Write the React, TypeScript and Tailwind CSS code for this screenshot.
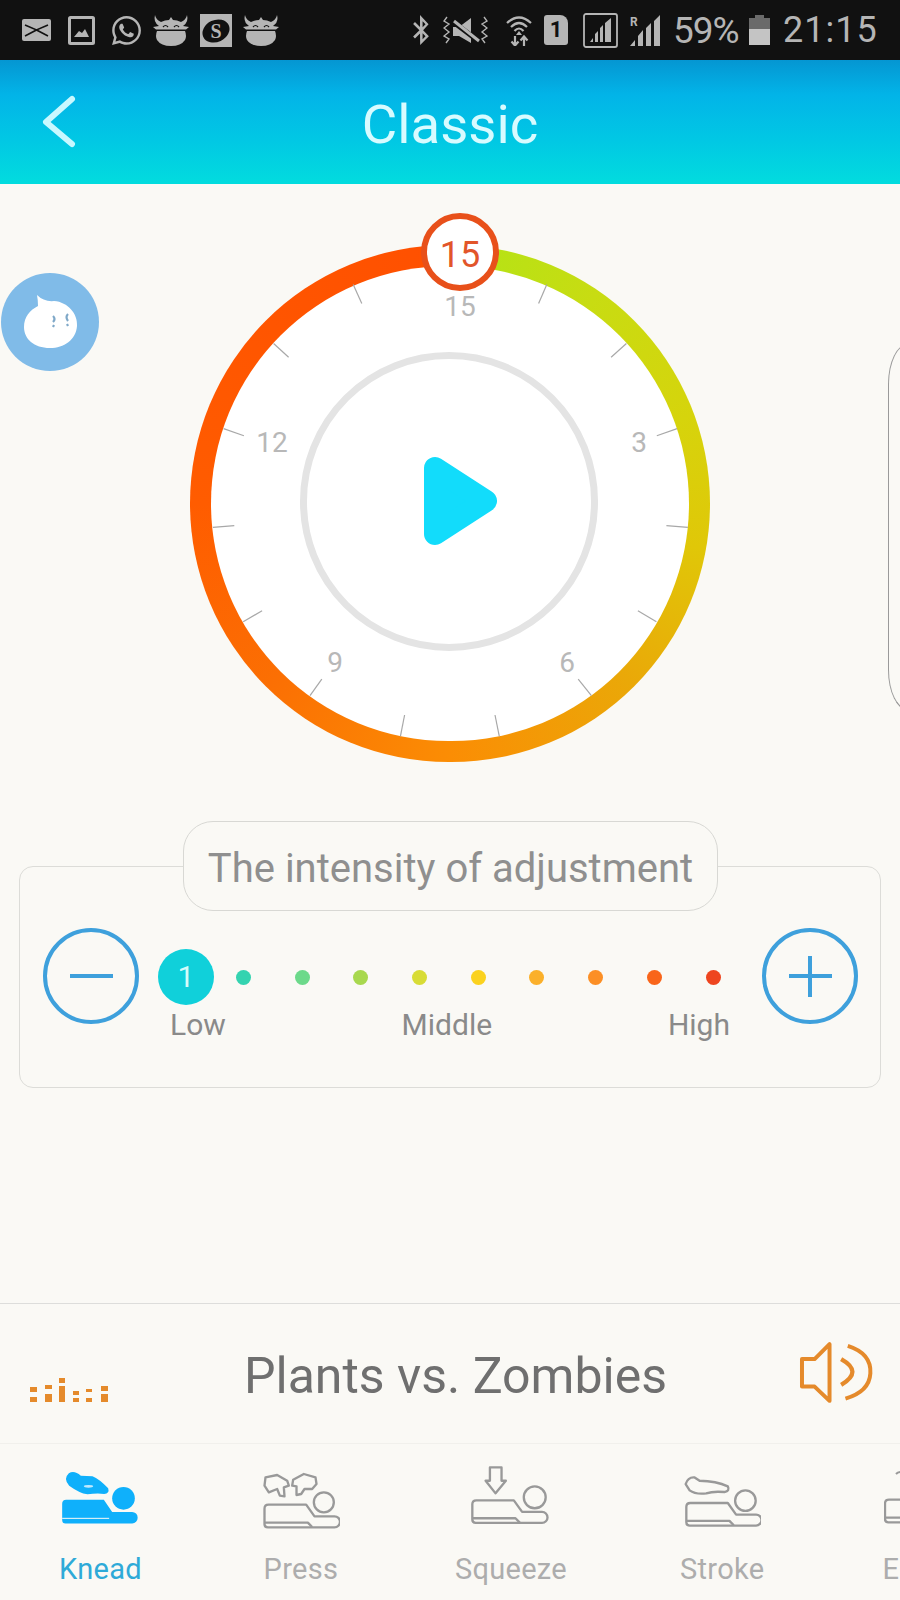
import { FaWhatsapp, FaBluetoothB } from "react-icons/fa";

const dots = ["#34d3b0", "#6cd98a", "#a8d84e", "#d8dc35", "#fbd21e", "#fbb02a", "#fc8f25", "#f9651a", "#ee451f"];

const ticks = [
  [353.2, 284.4, 361.8, 303.6],
  [546.8, 284.4, 538.6, 303.6],
  [273.6, 343.5, 288.6, 357.2],
  [626.4, 343.5, 611.1, 357.2],
  [223.6, 428.6, 243.9, 435.7],
  [677.1, 428.6, 656.8, 435.7],
  [212.9, 527.4, 234.3, 525.6],
  [687.9, 527.4, 666.4, 525.6],
  [243.2, 621.8, 262.1, 610.7],
  [656.4, 621.8, 637.9, 610.7],
  [310, 695.7, 321.8, 679.1],
  [591.4, 695.7, 578.2, 679.1],
  [400.4, 736.4, 404.6, 715],
  [499.3, 736.4, 495, 715],
];

// segments of the little equalizer, [x, y, w, h]
const eqBars = [
  [31, 95, 7, 5], [31, 105, 7, 5],
  [46, 93, 7, 4], [46, 102, 7, 8],
  [60, 86, 6, 5], [60, 94, 6, 16],
  [74, 99, 6, 4], [74, 106, 6, 4],
  [87, 97, 6, 3], [87, 106, 6, 4],
  [102, 94, 7, 5], [102, 102, 7, 8],
];

function Cow() {
  return (
    <svg viewBox="0 0 36 32" className="w-[36px] h-[32px]">
      <path d="M2 1 Q3 6 8 8 Q12 6 16 6 L18 3 L20 6 Q24 6 28 8 Q33 6 34 1 Q36 8 30 12 L36 13 L33 15.5 H3 L0 13 L6 12 Q0 8 2 1 Z" fill="#b5b5b5" />
      <path d="M10 13 q2.500 -3 5 0 M21 13 q2.500 -3 5 0" fill="none" stroke="#111" strokeWidth="1.2" />
      <path d="M4 17 H32 Q34 22 32 26 Q28 32 18 32 Q8 32 4 26 Q2 22 4 17 Z" fill="#b5b5b5" />
    </svg>
  );
}

function StatusBar() {
  return (
    <div className="h-[60px] shrink-0 bg-[#111111] flex items-center justify-between pl-[22px] pr-[25px] text-[#b5b5b5]">
      <div className="flex items-center">
        <svg viewBox="0 0 29 22" className="w-[29px] h-[22px]">
          <rect width="29" height="22" rx="2" fill="#b5b5b5" />
          <path d="M3 6 L14.500 11 L26 6 M3 17 L14.500 11 L26 17" fill="none" stroke="#111" strokeWidth="1.6" />
        </svg>
        <svg viewBox="0 0 27 29" className="w-[27px] h-[29px] ml-[17px]">
          <rect x="1.500" y="1.500" width="24" height="26" rx="1" fill="#111" stroke="#b5b5b5" strokeWidth="3" />
          <path d="M6 21 L11 15 L14 17 L17 13 L21 21 Z" fill="#b5b5b5" />
        </svg>
        <FaWhatsapp className="w-[33px] h-[33px] ml-[15px]" />
        <div className="ml-[10px]"><Cow /></div>
        <svg viewBox="0 0 32 33" className="w-[32px] h-[33px] ml-[11px]">
          <rect width="32" height="33" fill="#b5b5b5" />
          <ellipse cx="16" cy="17" rx="14" ry="11" fill="#111" transform="rotate(-25 16 17)" />
          <text x="16" y="24" textAnchor="middle" fontSize="20" fontWeight="700" fontFamily="'Liberation Serif', serif" fill="#b5b5b5">S</text>
        </svg>
        <div className="ml-[11px]"><Cow /></div>
      </div>
      <div className="flex items-center">
        <FaBluetoothB className="w-[24px] h-[30px]" />
        <svg viewBox="0 0 45 30" className="w-[45px] h-[30px] ml-[10px]">
          <path d="M4 2 L1 6 L6 9 L1 13 L6 17 L1 21 L6 24 L3 28 M41 2 L44 6 L39 9 L44 13 L39 17 L44 21 L39 24 L42 28" fill="none" stroke="#b5b5b5" strokeWidth="1.4" />
          <path d="M10 12 H16 L28 3 V28 L16 21 H10 Z" fill="#b5b5b5" />
          <path d="M9 6 L38 28" stroke="#111" strokeWidth="5" />
          <path d="M11 6 L36 26" stroke="#b5b5b5" strokeWidth="3" />
        </svg>
        <svg viewBox="0 0 26 31" className="w-[26px] h-[31px] ml-[18px]">
          <path d="M1 8 Q13 -3 25 8 M5 12 Q13 4 21 12 M8.500 16 Q13 11 17.500 16" fill="none" stroke="#b5b5b5" strokeWidth="2.2" />
          <path d="M13 16 L10 20 H16 Z" fill="#b5b5b5" />
          <path d="M9 21 V30 M5.500 26.500 L9 30.500 L12.500 26.500 M18 31 V22 M14.500 25.500 L18 21.500 L21.500 25.500" fill="none" stroke="#b5b5b5" strokeWidth="2.2" />
        </svg>
        <div className="ml-[12px] w-[24px] h-[30px] bg-[#b5b5b5] rounded-[3px] rounded-tr-[8px] flex items-center justify-center text-[#111111] text-[22px] leading-none font-bold">
          1
        </div>
        <svg viewBox="0 0 35 35" className="w-[35px] h-[35px] ml-[15px]">
          <rect x="1" y="1" width="33" height="33" rx="2" fill="none" stroke="#b5b5b5" strokeWidth="1.8" />
          <path d="M7 29 L10 25 V29 Z M12 29 V21 L15 18 V29 Z M17 29 V15 L20 12 V29 Z M22 29 V10 L28 5 V29 Z" fill="#b5b5b5" />
        </svg>
        <svg viewBox="0 0 30 31" className="w-[30px] h-[31px] ml-[12px]">
          <text x="0" y="11" fontSize="12" fontWeight="700" fontFamily="Roboto, sans-serif" fill="#b5b5b5">R</text>
          <path d="M0 31 L5 25 V31 Z M8 31 V21 L13 15 V31 Z M16 31 V13 L21 8 V31 Z M24 31 V6 L30 0 V31 Z" fill="#b5b5b5" />
        </svg>
        <span className="ml-[13px] text-[37px] leading-none font-['Roboto',sans-serif] w-[68px] whitespace-nowrap tracking-[-1px]">59%</span>
        <div className="ml-[8px] w-[21px] h-[30px] flex flex-col items-center">
          <div className="w-[9px] h-[3px] bg-[#6a6a6a]" />
          <div className="w-full h-[11px] bg-[#6a6a6a]" />
          <div className="w-full h-[16px] bg-[#c4c4c4]" />
        </div>
        <span className="ml-[13px] text-[36px] leading-none font-['Roboto',sans-serif] w-[92px] whitespace-nowrap tracking-[1px]">21:15</span>
      </div>
    </div>
  );
}

function Header() {
  return (
    <div className="h-[124px] shrink-0 relative flex items-center justify-center bg-[linear-gradient(180deg,#0596d2_0%,#02b4e8_28%,#01c8e4_65%,#02dcde_100%)]">
      <svg viewBox="0 0 36 58" className="absolute left-[41px] top-[32px] w-[36px] h-[58px]">
        <path d="M31 7 L5 30 L31 52" fill="none" stroke="#c8f8ff" strokeWidth="6" strokeLinecap="round" strokeLinejoin="round" />
      </svg>
      <span className="mt-[4px] text-[54.5px] leading-none text-[#d8fbff] font-['Roboto',sans-serif]">Classic</span>
    </div>
  );
}

function Dial() {
  return (
    <div className="relative ml-[190px] mt-[61px] w-[520px] h-[517px] rounded-full bg-[conic-gradient(#b2e416_0deg,#c8dc12_35deg,#d6d40c_70deg,#e0c708_100deg,#eaa808_135deg,#fb8d04_180deg,#fb6f03_225deg,#ff5c00_270deg,#ff5500_315deg,#ff5000_360deg)]">
      <div className="absolute inset-[21px] rounded-full bg-white" />
      <svg viewBox="190 245 520 517" className="absolute inset-0 w-[520px] h-[517px]">
        {ticks.map((t, i) => (
          <line key={i} x1={t[0]} y1={t[1]} x2={t[2]} y2={t[3]} stroke="#a8a8a8" strokeWidth="1.2" />
        ))}
        <polygon points="435,468 435,534 486,501" fill="#12dcfb" stroke="#12dcfb" strokeWidth="22" strokeLinejoin="round" />
      </svg>
      <div className="absolute left-[110px] top-[107px] w-[298px] h-[299px] rounded-full border-[7px] border-[#e4e4e4]" />

      <span className="absolute left-[250px] top-[45px] w-[40px] text-center text-[28px] leading-[34px] text-[#b8b8b8]">15</span>
      <span className="absolute left-[62px] top-[181px] w-[40px] text-center text-[28px] leading-[34px] text-[#b8b8b8]">12</span>
      <span className="absolute left-[429px] top-[181px] w-[40px] text-center text-[28px] leading-[34px] text-[#b8b8b8]">3</span>
      <span className="absolute left-[125px] top-[401px] w-[40px] text-center text-[28px] leading-[34px] text-[#b8b8b8]">9</span>
      <span className="absolute left-[357px] top-[401px] w-[40px] text-center text-[28px] leading-[34px] text-[#b8b8b8]">6</span>

      <div className="absolute left-[231px] top-[-32px] w-[78px] h-[78px] rounded-full bg-white border-[6px] border-[#e8501a] flex items-center justify-center">
        <span className="mt-[5px] text-[36px] leading-none text-[#e2552a]">15</span>
      </div>
    </div>
  );
}

function Intensity() {
  return (
    <div className="relative mt-[104px] ml-[19px] mr-[19px] h-[222px] rounded-[14px] border border-[#dcdcd8] pt-[61px] pl-[23px] flex items-start">
      <div className="absolute left-[163px] top-[-46px] w-[535px] h-[90px] rounded-[30px] border border-[#d8d8d4] bg-[#faf9f5] flex items-center justify-center">
        <span className="mt-[5px] text-[40px] leading-none text-[#8f8f8f]">The intensity of adjustment</span>
      </div>

      <div className="w-[96px] h-[96px] shrink-0 rounded-full border-[4px] border-[#3ea0dc] flex items-center justify-center">
        <div className="w-[43px] h-[4px] bg-[#3ea0dc]" />
      </div>

      <div className="ml-[19px] mt-[21px] w-[572px] shrink-0">
        <div className="flex items-center">
          <div className="w-[56px] h-[56px] rounded-full bg-[#10d0da] flex items-center justify-center text-[30px] leading-none text-[#d6fbfb]">
            1
          </div>
          <div className="ml-[22px] flex items-center gap-[43.7px]">
            {dots.map((c) => (
              <div key={c} className="w-[15px] h-[15px] rounded-full" style={{ backgroundColor: c }} />
            ))}
          </div>
        </div>
        <div className="mt-[3px] pl-[12px] flex justify-between text-[30px] leading-[34px] text-[#8a8a8a]">
          <span>Low</span>
          <span>Middle</span>
          <span>High</span>
        </div>
      </div>

      <div className="ml-[32px] w-[96px] h-[96px] shrink-0 rounded-full border-[4px] border-[#3ea0dc] flex items-center justify-center relative">
        <div className="w-[43px] h-[4px] bg-[#3ea0dc]" />
        <div className="absolute w-[4px] h-[41px] bg-[#3ea0dc]" />
      </div>
    </div>
  );
}

function Player() {
  return (
    <div className="h-[141px] shrink-0 border-t border-b border-t-[#dddddb] border-b-[#f1f0ec] flex items-center justify-between pl-[30px] pr-[25px]">
      <svg viewBox="31 80 78 32" className="w-[78px] h-[32px] mt-[28px]">
        {eqBars.map((b, i) => (
          <rect key={i} x={b[0]} y={b[1]} width={b[2]} height={b[3]} fill="#e58a2b" />
        ))}
      </svg>
      <span className="ml-[5px] mt-[4px] text-[50px] leading-none text-[#6f6f6f]">Plants vs. Zombies</span>
      <svg viewBox="1040 150 232 195" className="w-[77px] h-[65px] -mt-[2px]">
        <path d="M1052 207 H1090 L1135 162 V333 L1090 290 H1052 Z" fill="none" stroke="#e58a2b" strokeWidth="12" strokeLinejoin="round" />
        <path d="M1170 207 Q1238 245 1170 285" fill="none" stroke="#e58a2b" strokeWidth="13" />
        <path d="M1190 167 Q1262 190 1258 250 Q1255 305 1183 326" fill="none" stroke="#e58a2b" strokeWidth="12" />
      </svg>
    </div>
  );
}

const bodyPath = "M12 0 H125 L150 35 H210 a16 16 0 0 1 0 33 H10 Q0 68 0 58 V12 Q0 0 12 0 Z";

function OutlineBody({ x, y, head }: { x: number; y: number; head: [number, number, number] }) {
  return (
    <g fill="none" stroke="#999999" strokeWidth="7" strokeLinejoin="round">
      <path d={bodyPath} transform={`translate(${x} ${y})`} />
      <path d="M0 54 H130 L143 67" transform={`translate(${x} ${y})`} />
      <circle cx={head[0]} cy={head[1]} r={head[2]} fill="#faf9f5" />
    </g>
  );
}

function KneadIcon() {
  return (
    <svg viewBox="175 525 245 195" className="w-[82px] h-[65px]">
      <path d="M204 553 Q220 543 240 560 L275 562 Q295 570 322 598 Q327 614 310 615 Q290 612 260 616 Q235 612 205 590 Q186 570 204 553 Z" fill="#0fb0fb" />
      <ellipse cx="263" cy="592" rx="14" ry="4" fill="#bfe9fe" />
      <path d={bodyPath} transform="translate(184 632) scale(1 1.05)" fill="#0fb0fb" />
      <path d="M184 688 H325" fill="none" stroke="#faf9f5" strokeWidth="3" />
      <circle cx="368" cy="628" r="34" fill="#0fb0fb" />
    </svg>
  );
}

function PressIcon() {
  return (
    <svg viewBox="785 525 233 195" className="w-[78px] h-[65px]">
      <OutlineBody x={792} y={647} head={[970, 640, 30]} />
      <g fill="none" stroke="#999999" strokeWidth="7" strokeLinejoin="round">
        <path d="M795 565 L830 558 L860 575 L865 590 L850 595 L852 622 L838 620 L830 600 L805 610 L792 590 Z" />
        <path d="M945 565 L910 555 L878 572 L875 590 L888 592 L888 618 L902 615 L912 600 L935 600 L948 585 Z" />
      </g>
    </svg>
  );
}

function SqueezeIcon() {
  return (
    <svg viewBox="60 525 247 195" className="w-[82px] h-[65px]">
      <OutlineBody x={67} y={634} head={[255, 625, 33]} />
      <path d="M120 535 H155 V575 H168 L137 613 L107 575 H120 Z" fill="none" stroke="#999999" strokeWidth="7" strokeLinejoin="round" />
    </svg>
  );
}

function StrokeIcon() {
  return (
    <svg viewBox="703 525 232 195" className="w-[77px] h-[65px]">
      <OutlineBody x={710} y={642} head={[888, 635, 31]} />
      <path d="M708 585 Q715 563 735 565 L750 575 Q800 576 835 592 Q842 606 825 609 Q790 606 770 613 Q738 617 720 604 Z" fill="none" stroke="#999999" strokeWidth="7" strokeLinejoin="round" />
    </svg>
  );
}

function PartialIcon() {
  return (
    <svg viewBox="0 525 120 195" className="w-[40px] h-[65px] ml-[2px]">
      <OutlineBody x={3} y={632} head={[190, 625, 30]} />
      <path d="M36 555 Q44 546 60 550" fill="none" stroke="#999999" strokeWidth="6" />
    </svg>
  );
}

function TabBar() {
  const label = "mt-[23px] text-[29px] leading-[34px] tracking-[0.3px] whitespace-nowrap text-[#adadad]";
  return (
    <div className="flex-1 overflow-hidden flex pl-[59px] pt-[20px]">
      <div className="flex flex-col items-center shrink-0">
        <KneadIcon />
        <span className="mt-[23px] text-[29px] leading-[34px] tracking-[0.3px] text-[#2eaad8]">Knead</span>
      </div>
      <div className="ml-[120px] flex flex-col items-center shrink-0">
        <PressIcon />
        <span className={label}>Press</span>
      </div>
      <div className="ml-[115px] flex flex-col items-center shrink-0">
        <SqueezeIcon />
        <span className={label}>Squeeze</span>
      </div>
      <div className="ml-[113px] flex flex-col items-center shrink-0">
        <StrokeIcon />
        <span className={label}>Stroke</span>
      </div>
      <div className="ml-[118px] flex flex-col items-start shrink-0">
        <PartialIcon />
        <span className={label}>E</span>
      </div>
    </div>
  );
}

export default function App() {
  return (
    <div className="relative w-[900px] h-[1600px] overflow-hidden bg-[#faf9f5] flex flex-col font-['Roboto',sans-serif]">
      <StatusBar />
      <Header />

      {/* bulle flottante et carte suivante qui depasse a droite */}
      <div className="absolute left-[1px] top-[273px] w-[98px] h-[98px] rounded-full bg-[#80bbe8] flex items-center justify-center">
        <svg viewBox="0 0 60 60" className="w-[60px] h-[60px]">
          <path d="M17 3 Q24 10 34 9 C48 10 58 22 57 34 C56 48 44 56 30 56 C14 56 4 47 4 35 C4 25 10 18 18 14 Q18 8 17 3 Z" fill="#ffffff" />
          <path d="M33 24 q3 3 0 6 M34 33 l-1 2 M48 22 q-3 3 0 7 M47 32 l1 2" fill="none" stroke="#7fa8c8" strokeWidth="2.2" />
        </svg>
      </div>
      <div className="absolute left-[888px] top-[344px] w-[20px] h-[366px] rounded-tl-[20px_40px] rounded-bl-[20px_40px] border border-[#9a9a9a]" />

      <Dial />
      <Intensity />

      <div className="mt-[215px]">
        <Player />
      </div>
      <TabBar />
    </div>
  );
}
